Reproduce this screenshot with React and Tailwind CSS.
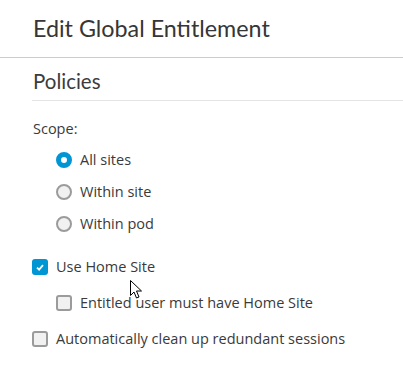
const body = { fontFamily: '"Open Sans", "Liberation Sans", sans-serif' };
const head = { fontFamily: 'Lato, "Open Sans", sans-serif' };

const scopes = [
  { label: "All sites", checked: true },
  { label: "Within site", checked: false },
  { label: "Within pod", checked: false },
];

const Radio = ({ checked }) =>
  checked ? (
    <span className="w-4 h-4 rounded-full border-[5px] border-[#0095d3] bg-white shrink-0" />
  ) : (
    <span className="w-4 h-4 rounded-full border-2 border-[#9b9b9b] bg-[#f1f1f1] shrink-0" />
  );

const Checkbox = ({ checked }) =>
  checked ? (
    <span className="w-4 h-4 rounded-[3px] bg-[#0095d3] shrink-0 flex items-center justify-center">
      <svg width="8" height="7" viewBox="0 0 8 7" fill="none">
        <path d="M1 3.6 L3.1 5.6 L7 1.2" stroke="white" strokeWidth="1.8" />
      </svg>
    </span>
  ) : (
    <span className="w-4 h-4 rounded-[3px] border-2 border-[#9b9b9b] bg-[#f1f1f1] shrink-0" />
  );

const CheckRow = ({ checked, label, indent }) => (
  <div className={`h-9 flex items-center gap-2 ${indent ? "pl-6" : ""}`}>
    <Checkbox checked={checked} />
    <span className="text-[14.5px] text-[#3a3a3a]">{label}</span>
  </div>
);

export default function App() {
  return (
    <div className="relative w-[403px] h-[368px] bg-white overflow-hidden" style={body}>
      {/* Modal header */}
      <div className="h-[58px] border-b border-[#cccccc] flex items-center pl-[33px]">
        <h2 className="text-[23.3px] text-[#363636] leading-none pt-[1px]" style={head}>
          Edit Global Entitlement
        </h2>
      </div>

      <div className="pl-[32px]">
        {/* Section title */}
        <div className="h-[43px] border-b border-[#e4e4e4] flex items-end pb-[9px] pl-px">
          <h3 className="text-[20.5px] text-[#3c3c3c] leading-none" style={head}>
            Policies
          </h3>
        </div>

        <div className="mt-[14px] h-[28px] flex items-center pl-px text-[14.5px] text-[#3a3a3a]">
          Scope:
        </div>

        <div className="mt-px pl-6">
          {scopes.map((s) => (
            <div key={s.label} className="h-8 flex items-center gap-2">
              <Radio checked={s.checked} />
              <span className="text-[14.5px] text-[#3a3a3a]">{s.label}</span>
            </div>
          ))}
        </div>

        <div className="mt-[9px]">
          <CheckRow checked label="Use Home Site" />
          <CheckRow indent label="Entitled user must have Home Site" />
          <CheckRow label="Automatically clean up redundant sessions" />
        </div>
      </div>

      {/* mouse pointer */}
      <svg className="absolute left-[130px] top-[280px]" width="14" height="20" viewBox="0 0 14 20">
        <path
          d="M0.5 0.5 L0.5 15.5 L4 12 L6.5 18 L9 17 L6.5 11 L11.5 11 Z"
          fill="white"
          stroke="black"
          strokeWidth="1"
          strokeLinejoin="round"
        />
      </svg>
    </div>
  );
}
